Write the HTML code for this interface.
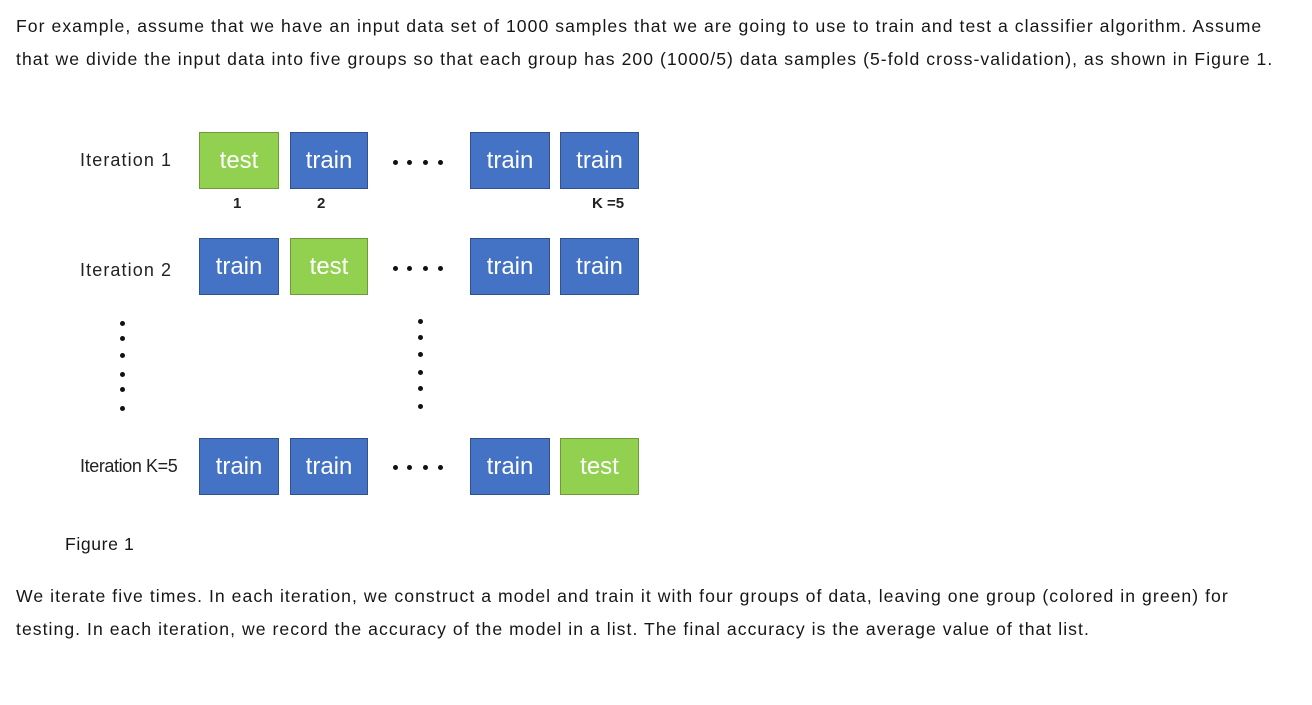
<!DOCTYPE html>
<html><head><style>
body{margin:0;width:1312px;height:705px;background:#fff;font-family:"Liberation Sans",sans-serif;color:#161616;position:relative;overflow:hidden}
.p{position:absolute;left:16px;font-size:17.6px;letter-spacing:1.05px;line-height:33px;white-space:nowrap}
.b{position:absolute;height:57px;color:#fff;font-size:24px;text-align:center;line-height:55px;box-sizing:border-box;border:1px solid #2f528f}
.bl{background:#4472c4}.gr{background:#92d050;border-color:#6f9a3a}
.lab{position:absolute;font-size:18px;color:#222;letter-spacing:1.1px}
.d{position:absolute;width:5px;height:5px;border-radius:50%;background:#111}
.n{position:absolute;font-size:15px;font-weight:bold;color:#222}
</style></head><body>
<div class="p" style="top:10px">For example, assume that we have an input data set of 1000 samples that we are going to use to train and test a classifier algorithm. Assume<br>that we divide the input data into five groups so that each group has 200 (1000/5) data samples (5-fold cross-validation), as shown in Figure 1.</div>

<div class="lab" style="left:80px;top:150px">Iteration 1</div>
<div class="lab" style="left:80px;top:260px">Iteration 2</div>
<div class="lab" style="left:80px;top:456px;letter-spacing:-0.4px">Iteration K=5</div>

<div class="b gr" style="left:199px;top:132px;width:80px">test</div>
<div class="b bl" style="left:290px;top:132px;width:78px">train</div>
<div class="b bl" style="left:470px;top:132px;width:80px">train</div>
<div class="b bl" style="left:560px;top:132px;width:79px">train</div>

<div class="b bl" style="left:199px;top:238px;width:80px">train</div>
<div class="b gr" style="left:290px;top:238px;width:78px">test</div>
<div class="b bl" style="left:470px;top:238px;width:80px">train</div>
<div class="b bl" style="left:560px;top:238px;width:79px">train</div>

<div class="b bl" style="left:199px;top:438px;width:80px">train</div>
<div class="b bl" style="left:290px;top:438px;width:78px">train</div>
<div class="b bl" style="left:470px;top:438px;width:80px">train</div>
<div class="b gr" style="left:560px;top:438px;width:79px">test</div>

<div class="n" style="left:233px;top:195px">1</div>
<div class="n" style="left:317px;top:195px">2</div>
<div class="n" style="left:592px;top:195px">K =5</div>

<div class="d" style="top:160px;left:393px"></div><div class="d" style="left:407px;top:160px"></div><div class="d" style="left:423px;top:160px"></div><div class="d" style="left:438px;top:160px"></div>
<div class="d" style="left:393px;top:266px"></div><div class="d" style="left:407px;top:266px"></div><div class="d" style="left:423px;top:266px"></div><div class="d" style="left:438px;top:266px"></div>
<div class="d" style="left:393px;top:465px"></div><div class="d" style="left:407px;top:465px"></div><div class="d" style="left:423px;top:465px"></div><div class="d" style="left:438px;top:465px"></div>

<div class="d" style="left:120px;top:321px"></div><div class="d" style="left:120px;top:336px"></div><div class="d" style="left:120px;top:353px"></div><div class="d" style="left:120px;top:372px"></div><div class="d" style="left:120px;top:387px"></div><div class="d" style="left:120px;top:406px"></div>
<div class="d" style="left:418px;top:319px"></div><div class="d" style="left:418px;top:335px"></div><div class="d" style="left:418px;top:352px"></div><div class="d" style="left:418px;top:370px"></div><div class="d" style="left:418px;top:386px"></div><div class="d" style="left:418px;top:404px"></div>

<div class="p" style="left:65px;top:528px;letter-spacing:0.6px">Figure 1</div>
<div class="p" style="top:580px">We iterate five times. In each iteration, we construct a model and train it with four groups of data, leaving one group (colored in green) for<br>testing. In each iteration, we record the accuracy of the model in a list. The final accuracy is the average value of that list.</div>
</body></html>
